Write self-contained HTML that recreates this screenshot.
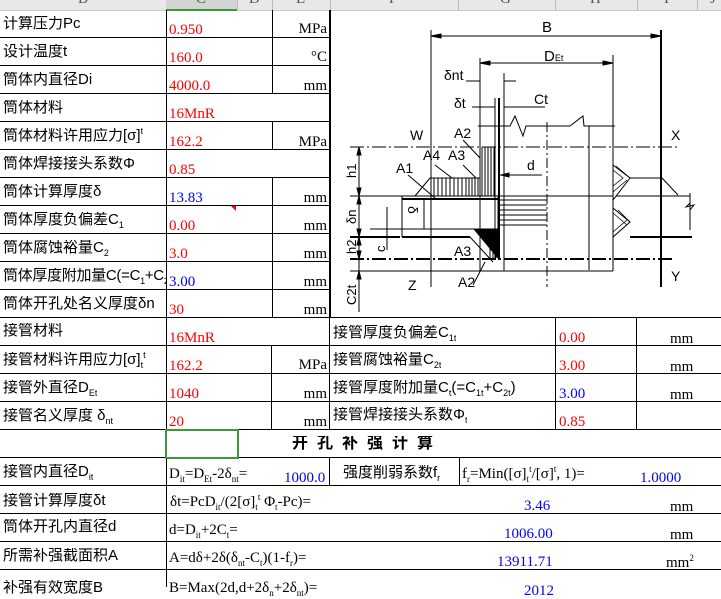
<!DOCTYPE html>
<html><head><meta charset="utf-8"><style>
body{margin:0;width:721px;height:587px;overflow:hidden;background:#fff;position:relative;font-family:"Liberation Serif","Noto Sans CJK SC",serif}
.h{position:absolute;height:1px;background:#000}
.v{position:absolute;width:1px;background:#000}
.t{position:absolute;white-space:nowrap;font-size:15px;line-height:16px}
.l{font-family:"Liberation Sans","Noto Sans CJK SC",sans-serif;font-size:15px;color:#000;max-width:163px;overflow:hidden}
.w{max-width:none}
.r{color:#f00}.b{color:#00f}
.u{text-align:right}
.hd{position:absolute;top:-9px;font:15px "Liberation Serif",serif;color:#555}
sub,sup{font-size:9px;line-height:0}
</style></head><body>
<!-- header -->
<div style="position:absolute;left:0;top:0;width:721px;height:10px;background:#e8e8e8;border-bottom:1px solid #c8c8c8"></div>
<div style="position:absolute;left:166px;top:0;width:71px;height:9px;background:#d4d4d4;border-bottom:2px solid #3c9a3c"></div>
<div class="hd" style="left:78px">B</div>
<div class="hd" style="left:196px;color:#2a7a2a">C</div>
<div class="hd" style="left:249px">D</div>
<div class="hd" style="left:296px">E</div>
<div class="hd" style="left:389px">F</div>
<div class="hd" style="left:500px">G</div>
<div class="hd" style="left:590px">H</div>
<div class="hd" style="left:664px">I</div>
<div class="hd" style="left:710px">J</div>
<div class="v" style="left:237px;top:0;height:10px;background:#bbb"></div>
<div class="v" style="left:272px;top:0;height:10px;background:#bbb"></div>
<div class="v" style="left:330px;top:0;height:10px;background:#bbb"></div>
<div class="v" style="left:458px;top:0;height:10px;background:#bbb"></div>
<div class="v" style="left:555px;top:0;height:10px;background:#bbb"></div>
<div class="v" style="left:637px;top:0;height:10px;background:#bbb"></div>
<div class="v" style="left:697px;top:0;height:10px;background:#bbb"></div>

<!-- upper grid -->
<div class="h" style="left:0;top:37px;width:330px"></div>
<div class="h" style="left:0;top:65px;width:330px"></div>
<div class="h" style="left:0;top:93px;width:330px"></div>
<div class="h" style="left:0;top:121px;width:330px"></div>
<div class="h" style="left:0;top:149px;width:330px"></div>
<div class="h" style="left:0;top:177px;width:330px"></div>
<div class="h" style="left:0;top:205px;width:330px"></div>
<div class="h" style="left:0;top:233px;width:330px"></div>
<div class="h" style="left:0;top:261px;width:330px"></div>
<div class="h" style="left:0;top:289px;width:330px"></div>
<div class="h" style="left:0;top:317px;width:721px"></div>
<div class="v" style="left:166px;top:10px;height:420px"></div>
<div class="v" style="left:329px;top:10px;height:307px"></div>
<div class="v" style="left:272px;top:10px;height:83px"></div>
<div class="v" style="left:272px;top:121px;height:28px"></div>
<div class="v" style="left:272px;top:177px;height:140px"></div>
<div style="position:absolute;left:231px;top:206px;width:0;height:0;border-left:5px solid transparent;border-top:5px solid #f00"></div>

<div class="t l" style="left:3px;top:16px">计算压力Pc</div><div class="t r" style="left:169px;top:22px">0.950</div><div class="t u" style="left:272px;width:55px;top:21px">MPa</div>
<div class="t l" style="left:3px;top:44px">设计温度t</div><div class="t r" style="left:169px;top:50px">160.0</div><div class="t u" style="left:272px;width:55px;top:49px">°C</div>
<div class="t l" style="left:3px;top:72px">筒体内直径Di</div><div class="t r" style="left:169px;top:78px">4000.0</div><div class="t u" style="left:272px;width:55px;top:78px">mm</div>
<div class="t l" style="left:3px;top:100px">筒体材料</div><div class="t r" style="left:169px;top:106px">16MnR</div>
<div class="t l" style="left:3px;top:128px">筒体材料许用应力[σ]<sup>t</sup></div><div class="t r" style="left:169px;top:134px">162.2</div><div class="t u" style="left:272px;width:55px;top:134px">MPa</div>
<div class="t l" style="left:3px;top:156px">筒体焊接接头系数Φ</div><div class="t r" style="left:169px;top:162px">0.85</div>
<div class="t l" style="left:3px;top:184px">筒体计算厚度δ</div><div class="t b" style="left:169px;top:190px">13.83</div><div class="t u" style="left:272px;width:55px;top:190px">mm</div>
<div class="t l" style="left:3px;top:212px">筒体厚度负偏差C<sub>1</sub></div><div class="t r" style="left:169px;top:218px">0.00</div><div class="t u" style="left:272px;width:55px;top:218px">mm</div>
<div class="t l" style="left:3px;top:240px">筒体腐蚀裕量C<sub>2</sub></div><div class="t r" style="left:169px;top:246px">3.0</div><div class="t u" style="left:272px;width:55px;top:246px">mm</div>
<div class="t l" style="left:3px;top:268px;letter-spacing:-0.3px">筒体厚度附加量C(=C<sub>1</sub>+C<sub>2</sub></div><div class="t b" style="left:169px;top:274px">3.00</div><div class="t u" style="left:272px;width:55px;top:274px">mm</div>
<div class="t l" style="left:3px;top:296px">筒体开孔处名义厚度δn</div><div class="t r" style="left:169px;top:302px">30</div><div class="t u" style="left:272px;width:55px;top:302px">mm</div>

<!-- diagram -->
<svg style="position:absolute;left:330px;top:0" width="391" height="317" viewBox="0 0 391 317" fill="none" stroke="#000" stroke-width="1" font-family="Liberation Sans,sans-serif" font-size="14">
<line x1="101" y1="30" x2="101" y2="287"/>
<line x1="331" y1="30" x2="331" y2="287" stroke-width="2"/>
<line x1="101" y1="36" x2="331" y2="36"/>
<path d="M101 36l10-2v4zM331 36l-10-2v4z" fill="#000"/>
<text x="212" y="32" fill="#000" stroke="none" font-size="15">B</text>
<line x1="150" y1="58" x2="150" y2="271"/>
<line x1="283" y1="55" x2="283" y2="271"/>
<line x1="150" y1="63" x2="283" y2="63"/>
<path d="M150 63l10-2v4zM283 63l-10-2v4z" fill="#000"/>
<text x="214" y="61" fill="#000" stroke="none" font-size="15">D<tspan font-size="9">Et</tspan></text>
<text x="114" y="80" fill="#000" stroke="none">δnt</text>
<line x1="136" y1="81" x2="150" y2="81"/><line x1="174" y1="81" x2="186" y2="81"/>
<line x1="174" y1="73" x2="174" y2="271"/>
<text x="124" y="108" fill="#000" stroke="none">δt</text>
<line x1="142" y1="107" x2="165" y2="107"/>
<line x1="174" y1="107" x2="215" y2="107"/>
<text x="204" y="104" fill="#000" stroke="none">Ct</text>
<line x1="165" y1="98" x2="165" y2="260"/>
<line x1="169" y1="98" x2="169" y2="260" stroke-width="2"/>
<path d="M148 126H180L185 116L193 136L196 126H240L253 116L254 126H285"/>
<line x1="217" y1="122" x2="217" y2="287" stroke-dasharray="10,3,2,3"/>
<line x1="259" y1="126" x2="259" y2="270"/>
<text x="80" y="140" fill="#000" stroke="none">W</text>
<text x="341" y="140" fill="#000" stroke="none">X</text>
<line x1="20" y1="147" x2="350" y2="147" stroke-dasharray="14,3,2,3"/>
<line x1="29" y1="147" x2="29" y2="312"/>
<path d="M29 147l-2 8h4zM29 196l-2-8h4zM29 196l-2 8h4zM29 237l-2-8h4zM29 237l-2 8h4zM29 259l-2-8h4zM29 271l-2 8h4z" fill="#000"/>
<text x="124" y="138" fill="#000" stroke="none">A2</text>
<line x1="133" y1="140" x2="150" y2="158"/>
<text x="93" y="160" fill="#000" stroke="none">A4</text>
<text x="118" y="160" fill="#000" stroke="none">A3</text>
<text x="66" y="173" fill="#000" stroke="none">A1</text>
<line x1="78" y1="175" x2="105" y2="198"/>
<line x1="105" y1="165" x2="122" y2="178"/>
<line x1="133" y1="165" x2="146" y2="178"/>
<text x="197" y="170" fill="#000" stroke="none">d</text>
<line x1="170" y1="175" x2="212" y2="175"/>
<path d="M171 175l8-2v4z" fill="#000"/>
<g stroke-width="1">
<path d="M152 147V196M155 147V196M158 147V196M161 147V196M164 147V196"/>
<path d="M100 178H150M85 196L100 178M104 178V196M108 178V196M112 178V196M116 178V196M120 178V196M124 178V196M128 178V196M132 178V196M136 178V196M139 178V196M142 178V196M145 178V196M148 178V196"/>
</g>
<line x1="20" y1="196" x2="360" y2="196"/>
<line x1="72" y1="199" x2="168" y2="199" stroke-width="2"/>
<line x1="72" y1="196" x2="72" y2="237"/>
<line x1="168" y1="196" x2="168" y2="230"/>
<line x1="40" y1="229" x2="168" y2="229"/>
<line x1="72" y1="237" x2="140" y2="237" stroke-width="2"/>
<line x1="20" y1="237" x2="70" y2="237" stroke-width="2"/>
<path d="M170 200H217M170 205H217M170 210H217M170 215H217M170 220H217M170 225H217"/>
<line x1="57" y1="207" x2="57" y2="250"/>
<text x="78" y="214" fill="#000" stroke="none" transform="rotate(90 82 210)">δ</text>
<line x1="94" y1="198" x2="94" y2="229"/>
<path d="M144 229L168 229L168 258Z" fill="#000"/>
<path d="M160 230V258M163 230V258M166 230V258"/>
<line x1="140" y1="237" x2="163" y2="262"/>
<text x="124" y="256" fill="#000" stroke="none">A3</text>
<path d="M283 165L300 178L283 200ZM283 208L300 222L283 237Z" fill="#fff" stroke="#000"/>
<path d="M283 170L293 178L283 186M286 166L300 178M283 192L297 180M283 213L297 225M283 232L297 220M288 210L300 222" stroke-width="0.8"/>
<line x1="300" y1="178" x2="332" y2="178"/>
<line x1="332" y1="178" x2="348" y2="195"/>
<line x1="300" y1="237" x2="362" y2="237" stroke-width="2"/>
<path d="M360 193V210L364 205L356 207L360 203V230"/>
<line x1="20" y1="259" x2="345" y2="259" stroke-width="2" stroke-dasharray="14,3,2,3"/>
<line x1="20" y1="271" x2="283" y2="271"/>
<line x1="155" y1="262" x2="143" y2="285"/>
<text x="128" y="287" fill="#000" stroke="none">A2</text>
<text x="341" y="281" fill="#000" stroke="none">Y</text>
<text x="78" y="290" fill="#000" stroke="none">Z</text>
<text fill="#000" stroke="none" font-size="13" transform="translate(26 178) rotate(-90)">h1</text>
<text fill="#000" stroke="none" font-size="13" transform="translate(26 224) rotate(-90)">δn</text>
<text fill="#000" stroke="none" font-size="13" transform="translate(26 254) rotate(-90)">h2</text>
<text fill="#000" stroke="none" font-size="13" transform="translate(55 252) rotate(-90)">c</text>
<text fill="#000" stroke="none" font-size="13" transform="translate(26 305) rotate(-90)">C2t</text>
</svg>
<div class="v" style="left:330px;top:10px;height:307px"></div>

<!-- lower grid -->
<div class="h" style="left:0;top:345px;width:721px"></div>
<div class="h" style="left:0;top:373px;width:721px"></div>
<div class="h" style="left:0;top:401px;width:721px"></div>
<div class="h" style="left:0;top:429px;width:721px"></div>
<div class="h" style="left:0;top:457px;width:721px"></div>
<div class="h" style="left:0;top:485px;width:721px"></div>
<div class="h" style="left:0;top:513px;width:721px"></div>
<div class="h" style="left:0;top:541px;width:721px"></div>
<div class="h" style="left:0;top:569px;width:721px"></div>
<div class="v" style="left:166px;top:457px;height:130px"></div>
<div class="v" style="left:271px;top:345px;height:84px"></div>
<div class="v" style="left:329px;top:317px;height:112px"></div>
<div class="v" style="left:329px;top:457px;height:28px"></div>
<div class="v" style="left:459px;top:457px;height:28px"></div>
<div class="v" style="left:555px;top:317px;height:112px"></div>
<div class="v" style="left:636px;top:317px;height:112px"></div>
<div style="position:absolute;left:165px;top:429px;width:70px;height:26px;border:2px solid #3c9a3c"></div>

<div class="t l" style="left:3px;top:323px">接管材料</div><div class="t r" style="left:169px;top:330px">16MnR</div>
<div class="t l w" style="left:333px;top:325px">接管厚度负偏差C<sub>1t</sub></div><div class="t r" style="left:559px;top:330px">0.00</div><div class="t" style="left:670px;top:331px">mm</div>
<div class="t l" style="left:3px;top:352px">接管材料许用应力[σ]<sub>t</sub><sup>t</sup></div><div class="t r" style="left:169px;top:358px">162.2</div><div class="t u" style="left:271px;width:56px;top:357px">MPa</div>
<div class="t l w" style="left:333px;top:352px">接管腐蚀裕量C<sub>2t</sub></div><div class="t r" style="left:559px;top:358px">3.00</div><div class="t" style="left:670px;top:359px">mm</div>
<div class="t l" style="left:3px;top:380px">接管外直径D<sub>Et</sub></div><div class="t r" style="left:169px;top:386px">1040</div><div class="t u" style="left:271px;width:56px;top:386px">mm</div>
<div class="t l w" style="left:333px;top:380px">接管厚度附加量C<sub>t</sub>(=C<sub>1t</sub>+C<sub>2t</sub>)</div><div class="t b" style="left:559px;top:386px">3.00</div><div class="t" style="left:670px;top:387px">mm</div>
<div class="t l" style="left:3px;top:408px">接管名义厚度 δ<sub>nt</sub></div><div class="t r" style="left:169px;top:414px">20</div><div class="t u" style="left:271px;width:56px;top:414px">mm</div>
<div class="t l w" style="left:333px;top:407px">接管焊接接头系数Φ<sub>t</sub></div><div class="t r" style="left:559px;top:414px">0.85</div>
<div class="t l w" style="left:292px;top:436px;font-weight:bold;font-size:16px;letter-spacing:9px">开孔补强计算</div>
<div class="t l" style="left:3px;top:464px">接管内直径D<sub>it</sub></div><div class="t" style="left:169px;top:466px">D<sub>it</sub>=D<sub>Et</sub>-2δ<sub>nt</sub>=</div><div class="t b" style="left:284px;top:470px">1000.0</div>
<div class="t l w" style="left:343px;top:465px">强度削弱系数f<sub>r</sub></div><div class="t" style="left:462px;top:466px">f<sub>r</sub>=Min([σ]<sub>t</sub><sup>t</sup>/[σ]<sup>t</sup>, 1)=</div><div class="t b" style="left:640px;top:470px">1.0000</div>
<div class="t l" style="left:3px;top:493px">接管计算厚度δt</div><div class="t" style="left:170px;top:494px">δt=PcD<sub>it</sub>/(2[σ]<sub>t</sub><sup>t</sup> Φ<sub>t</sub>-Pc)=</div><div class="t b" style="left:524px;top:498px">3.46</div><div class="t" style="left:670px;top:499px">mm</div>
<div class="t l" style="left:3px;top:519px">筒体开孔内直径d</div><div class="t" style="left:169px;top:522px">d=D<sub>it</sub>+2C<sub>t</sub>=</div><div class="t b" style="left:504px;top:526px">1006.00</div><div class="t" style="left:670px;top:527px">mm</div>
<div class="t l" style="left:3px;top:548px">所需补强截面积A</div><div class="t" style="left:169px;top:550px">A=dδ+2δ(δ<sub>nt</sub>-C<sub>t</sub>)(1-f<sub>r</sub>)=</div><div class="t b" style="left:497px;top:554px">13911.71</div><div class="t" style="left:666px;top:555px">mm<sup>2</sup></div>
<div class="t l" style="left:3px;top:580px">补强有效宽度B</div><div class="t" style="left:169px;top:580px">B=Max(2d,d+2δ<sub>n</sub>+2δ<sub>nt</sub>)=</div><div class="t b" style="left:524px;top:583px">2012</div>
</body></html>
